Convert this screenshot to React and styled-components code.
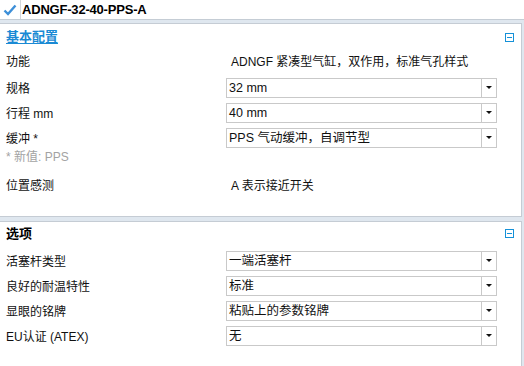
import React from 'react'
import styled, {createGlobalStyle} from "styled-components"

const GlobalStyle=createGlobalStyle`
html,body{
margin:0;
padding:0;
background:#dfe7ef;
font-family:"Liberation Sans","Noto Sans CJK SC",sans-serif;
font-size:12px;
color:#111;
}
`

const Page=styled.div`
width:524px;
height:366px;
overflow:hidden;
`

const TopBar=styled.div`
display:flex;
align-items:stretch;
height:19px;
background:#fff;
border-bottom:1px solid #c5cdd5;
`

const CheckCell=styled.div`
width:20px;
border-right:1px solid #d3d7db;
display:flex;
align-items:center;
justify-content:center;
`

const ProductTitle=styled.div`
padding-left:1px;
font-size:13px;
font-weight:bold;
letter-spacing:-0.2px;
line-height:19px;
color:#000;
`

const Body=styled.div`
display:flex;
flex-direction:column;
gap:4px;
padding:3px 2px 0 0;
`

const Panel=styled.div`
background:#fff;
border:1px solid #c5ccd4;
border-left:none;
height:${props=>props.h}px;
box-sizing:border-box;
`

const PanelHead=styled.div`
height:24px;
display:flex;
justify-content:space-between;
align-items:flex-start;
padding:0 7px 0 6px;
`

const HeadTitle=styled.div`
font-size:13px;
font-weight:bold;
line-height:${props=>props.lh}px;
color:${props=>props.link?"#1a8ad4":"#000"};
text-decoration:${props=>props.link?"underline":"none"};
text-underline-offset:2px;
`

const Toggle=styled.div`
margin-top:${props=>props.top}px;
width:9px;
height:9px;
`

const Row=styled.div`
display:grid;
grid-template-columns:220px 271px;
align-items:center;
height:${props=>props.h||25}px;
margin-top:${props=>props.mt||0}px;
padding-left:6px;
`

const Label=styled.div`
font-size:12px;
color:#111;
white-space:nowrap;
`

const Note=styled.div`
padding-left:6px;
height:14px;
line-height:14px;
font-size:12px;
color:#a3a3a3;
`

const Value=styled.div`
padding-left:5px;
font-size:12px;
color:#111;
white-space:nowrap;
`

const Select=styled.div`
display:flex;
height:20px;
box-sizing:border-box;
border:1px solid #c9c9c9;
background:#fff;
`

const SelectText=styled.div`
flex:1;
padding-left:2px;
font-size:12.5px;
line-height:18px;
color:#111;
white-space:nowrap;
overflow:hidden;
`

const ArrowBox=styled.div`
width:14px;
border-left:1px solid #c9c9c9;
display:flex;
align-items:center;
justify-content:center;
&:after{
content:"";
border-left:3px solid transparent;
border-right:3px solid transparent;
border-top:3px solid #111;
}
`

const MinusIcon=()=>(
    <svg width="9" height="9" viewBox="0 0 9 9" shapeRendering="crispEdges">
        <rect x="0.5" y="0.5" width="8" height="8" fill="#fff" stroke="#1591d8" strokeWidth="1"/>
        <rect x="2" y="4" width="5" height="1" fill="#1591d8"/>
    </svg>
)

const Dropdown=({children})=>(
    <Select>
        <SelectText>{children}</SelectText>
        <ArrowBox/>
    </Select>
)

const options=[
    {label:"活塞杆类型",value:"一端活塞杆"},
    {label:"良好的耐温特性",value:"标准"},
    {label:"显眼的铭牌",value:"粘贴上的参数铭牌"},
    {label:"EU认证 (ATEX)",value:"无"},
]

const App = () => {
    return (
        <Page>
            <GlobalStyle/>
            <TopBar>
                <CheckCell>
                    <svg width="14" height="12" viewBox="0 0 14 12">
                        <polyline points="1.5,6.5 5,10 12.5,1.5" fill="none" stroke="#3d8fd8" strokeWidth="2.4"/>
                    </svg>
                </CheckCell>
                <ProductTitle>ADNGF-32-40-PPS-A</ProductTitle>
            </TopBar>
            <Body>
                <Panel h={194}>
                    <PanelHead>
                        <HeadTitle link lh={25}>基本配置</HeadTitle>
                        <Toggle top={7}><MinusIcon/></Toggle>
                    </PanelHead>
                    <Row h={24}>
                        <Label>功能</Label>
                        <Value>ADNGF 紧凑型气缸，双作用，标准气孔样式</Value>
                    </Row>
                    <Row mt={3}>
                        <Label>规格</Label>
                        <Dropdown>32 mm</Dropdown>
                    </Row>
                    <Row>
                        <Label>行程 mm</Label>
                        <Dropdown>40 mm</Dropdown>
                    </Row>
                    <Row>
                        <Label>缓冲 *</Label>
                        <Dropdown>PPS 气动缓冲，自调节型</Dropdown>
                    </Row>
                    <Note>* 新值: PPS</Note>
                    <Row mt={8}>
                        <Label>位置感测</Label>
                        <Value>A 表示接近开关</Value>
                    </Row>
                </Panel>
                <Panel h={160}>
                    <PanelHead>
                        <HeadTitle lh={24}>选项</HeadTitle>
                        <Toggle top={5}><MinusIcon/></Toggle>
                    </PanelHead>
                    {options.map(item=>(
                        <Row key={item.label} mt={item.label==="活塞杆类型"?2:0}>
                            <Label>{item.label}</Label>
                            <Dropdown>{item.value}</Dropdown>
                        </Row>
                    ))}
                </Panel>
            </Body>
        </Page>
    )
}

export default App
